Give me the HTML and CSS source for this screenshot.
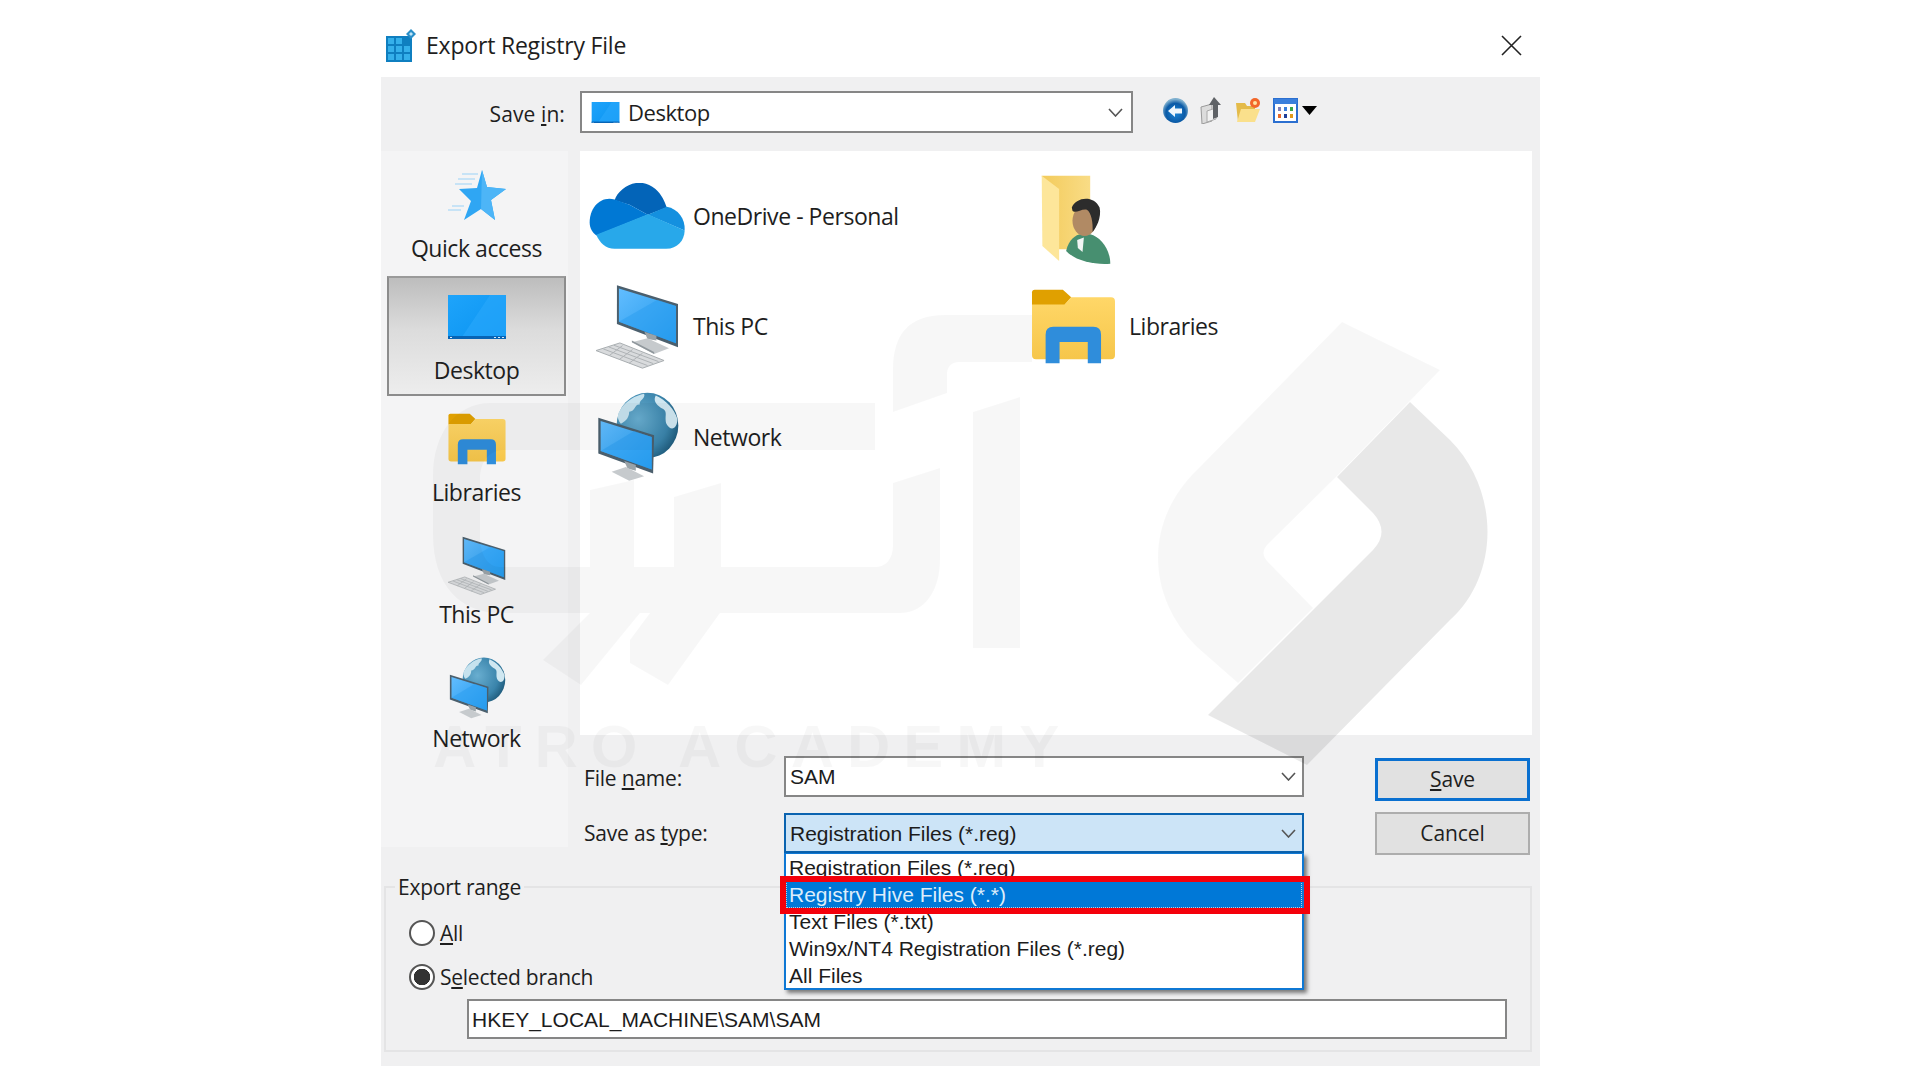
FILE: index.html
```html
<!DOCTYPE html>
<html lang="en">
<head>
<meta charset="utf-8">
<title>Export Registry File</title>
<link rel="stylesheet" href="styles.css">
</head>
<body>
<svg class="defs" aria-hidden="true">
  <defs>
    <linearGradient id="gScreen" x1="0" y1="0" x2="1" y2="1"><stop offset="0" stop-color="#62bdff"/><stop offset="1" stop-color="#1f97ea"/></linearGradient>
    <linearGradient id="gDesk" x1="0" y1="0" x2="1" y2="1"><stop offset="0" stop-color="#1ea4fb"/><stop offset="1" stop-color="#0a93f0"/></linearGradient>
    <radialGradient id="gGlobe" cx=".35" cy=".4" r=".75"><stop offset="0" stop-color="#69aed0"/><stop offset=".65" stop-color="#3a84ab"/><stop offset="1" stop-color="#174f6e"/></radialGradient>
    <linearGradient id="gFolder" x1="0" y1="0" x2="0" y2="1"><stop offset="0" stop-color="#ffd768"/><stop offset="1" stop-color="#f6c64a"/></linearGradient>
    <linearGradient id="gBack" x1="0" y1="0" x2="1" y2="0"><stop offset="0" stop-color="#f3cb5b"/><stop offset="1" stop-color="#f9dc86"/></linearGradient>
    <radialGradient id="gBackBtn" cx=".5" cy=".6" r=".55"><stop offset="0" stop-color="#1a86d8"/><stop offset=".7" stop-color="#0b5aa6"/><stop offset="1" stop-color="#7fb0cf"/></radialGradient>

    <symbol id="pc" viewBox="50 345 250 255">
      <path d="M113 348L297 405V535L113 465Z" fill="#4b5f6d"/>
      <path d="M119 358L291 411V523L119 458Z" fill="url(#gScreen)"/>
      <path d="M119 458L235 392L291 411V523Z" fill="#2b9ff0" opacity=".55"/>
      <path d="M196 488L232 500V515L205 510Z" fill="#9aa3a8"/>
      <path d="M158 520L205 508L270 538L225 555Z" fill="#c6cacd"/>
      <path d="M158 520L225 555V549L158 515Z" fill="#8f979c"/>
      <path d="M50 545L122 522L255 575L190 598Z" fill="#d9dbdd" stroke="#a8adb0" stroke-width="3"/>
      <path d="M72 540L205 590M88 534L222 584M104 529L238 578M130 530L90 560M160 542L120 572M190 553L150 583" stroke="#aeb2b5" stroke-width="3" fill="none"/>
    </symbol>

    <symbol id="net" viewBox="50 665 250 270">
      <ellipse cx="205" cy="765" rx="93" ry="98" fill="url(#gGlobe)"/>
      <path d="M122 720C140 690 170 675 195 670C200 685 178 690 182 702C165 700 170 722 150 724C150 745 135 755 125 760C112 745 115 730 122 720Z" fill="#c6e2ee"/>
      <path d="M230 675C262 690 285 715 295 745C296 775 275 785 262 760C255 735 270 722 245 712C230 700 222 690 230 675Z" fill="#cfe7f1"/>
      <path d="M57 742L225 795L222 910L57 850Z" fill="#4b5f6d"/>
      <path d="M64 752L218 800V898L64 842Z" fill="url(#gScreen)"/>
      <path d="M64 842L165 782L218 800V898Z" fill="#2b9ff0" opacity=".55"/>
      <path d="M135 872L170 884V902L145 895Z" fill="#9aa3a8"/>
      <path d="M97 905L140 890L195 918L150 932Z" fill="#c6cacd"/>
    </symbol>

    <symbol id="onedrive" viewBox="28 33 292 200">
      <path d="M105 84C118 45 178 8 228 50C248 68 256 88 262 106L205 128L150 98Z" fill="#0364b8"/>
      <path d="M105 82C62 70 30 108 30 150C30 168 38 180 50 190L205 128L150 98Z" fill="#0078d4"/>
      <path d="M262 104C296 110 318 140 316 175L205 128Z" fill="#1490df"/>
      <path d="M50 188L205 126L316 175C315 205 295 230 260 230H105C78 230 60 212 50 188Z" fill="#28a8ea"/>
    </symbol>

    <symbol id="lib" viewBox="35 368 254 226">
      <path d="M37 378Q37 370 45 370H130L155 393L135 416H37Z" fill="#e0a000"/>
      <path d="M37 415H135L155 393H275Q287 393 287 405V568Q287 580 275 580H49Q37 580 37 568Z" fill="url(#gFolder)"/>
      <path d="M78 592V505Q78 482 101 482H222Q245 482 245 505V592H205V528H120V592Z" fill="#2f8ddb"/>
    </symbol>

    <symbol id="user" viewBox="65 25 215 275">
      <path d="M70 30H215V250H120Z" fill="url(#gBack)"/>
      <path d="M70 30L122 70V285L72 240Z" fill="#fde69a"/>
      <path d="M143 255C150 222 172 205 188 205H215C245 212 275 250 275 293C230 297 170 285 143 255Z" fill="#478f70"/>
      <path d="M176 222L196 215L192 258L178 246Z" fill="#f2f5f4"/>
      <ellipse cx="198" cy="165" rx="36" ry="45" fill="#b18a64"/>
      <path d="M160 125C170 95 225 85 243 125C250 155 232 188 222 198C224 170 218 140 205 132C190 128 170 145 162 135Z" fill="#2c2c2c"/>
    </symbol>

    <symbol id="desk" viewBox="0 0 58 44">
      <rect width="58" height="44" fill="url(#gDesk)"/>
      <path d="M14 42L42 0H58V42Z" fill="#2aa8fb" opacity=".6"/>
      <rect y="41" width="58" height="3" fill="#0764b5"/>
      <path d="M46 42h2v1h-2zM50 42h2v1h-2zM54 42h2v1h-2zM2 42h2v1H2z" fill="#d8ecfb"/>
    </symbol>

    <symbol id="star" viewBox="0 0 58 50">
      <path d="M34 0L39 17L58 19L43 30L47 50L33 39L16 50L23 31L11 19L29 18Z" fill="#2fa6f3"/>
      <path d="M34 0L33 39L47 50L43 30L58 19L39 17Z" fill="#4db5f7"/>
      <path d="M14 4H30M10 9H27M7 14H24M4 36H16M0 40H13" stroke="#b8ddf6" stroke-width="1.5" fill="none"/>
    </symbol>

    <symbol id="chev" viewBox="0 0 15 9">
      <path d="M1 1L7.5 8L14 1" fill="none" stroke="#555" stroke-width="1.6"/>
    </symbol>
  </defs>
</svg>

<header class="titlebar">
  <svg class="app-icon" viewBox="0 0 30 33" aria-hidden="true">
    <rect x="0" y="7" width="26" height="26" fill="#0f7fc0"/>
    <path d="M2 9h6v6H2zM10 9h6v6h-6zM2 17h6v6H2zM10 17h6v6h-6zM18 17h6v6h-6zM2 25h6v6H2zM10 25h6v6h-6zM18 25h6v6h-6z" fill="#35b0ea"/>
    <path d="M25 0L30 5L25 10L20 5Z" fill="#2a8fc8"/>
    <path d="M25 3L27 5L25 7L23 5Z" fill="#bfe5f7"/>
  </svg>
  <h1 class="title">Export Registry File</h1>
  <svg class="close" viewBox="0 0 21 21" aria-hidden="true"><path d="M1 1L20 20M20 1L1 20" stroke="#222" stroke-width="1.6" fill="none"/></svg>
</header>

<main class="panel">
  <div class="toolbar">
    <label class="save-in">Save <u>i</u>n:</label>
    <div class="combo combo-location">
      <svg class="desk-small"><use href="#desk"/></svg>
      <span class="ui-text">Desktop</span>
      <svg class="chev"><use href="#chev"/></svg>
    </div>
    <div class="tools">
      <svg class="tool tool-back" viewBox="0 0 25 25" aria-hidden="true">
        <circle cx="12.5" cy="12.5" r="12.5" fill="url(#gBackBtn)"/>
        <path d="M5 13L12 7V10.5H19V15.5H12V19Z" fill="#eef6fc"/>
      </svg>
      <svg class="tool tool-up" viewBox="0 0 22 27" aria-hidden="true">
        <path d="M1 10L12 7V24L2 27Z" fill="#dcdcdc" stroke="#9a9a9a"/>
        <path d="M7 14L16 11V22L7 25Z" fill="#f1f1f1" stroke="#aaa"/>
        <path d="M14 0L21 8H18V20L13 22V8H9Z" fill="#5f6266"/>
      </svg>
      <svg class="tool tool-new" viewBox="0 0 25 25" aria-hidden="true">
        <path d="M0 5H9L11 8H19V24L2 24Z" fill="#e4bb4a"/>
        <path d="M1 24L5 11H24L19 24Z" fill="#fae08c"/>
        <circle cx="19" cy="5" r="5" fill="#f2672a"/>
        <circle cx="19" cy="5" r="2" fill="#ffe3a0"/>
      </svg>
      <svg class="tool" viewBox="0 0 25 25" aria-hidden="true">
        <rect x="1" y="1" width="23" height="23" fill="#fff" stroke="#2b6fd0" stroke-width="2"/>
        <rect x="1" y="1" width="23" height="5" fill="#3a7fdc"/>
        <path d="M5 9h3v4H5z" fill="#7f7fb8"/><path d="M11 9h3v4h-3z" fill="#3a7fdc"/><path d="M17 9h3v4h-3z" fill="#3aa54a"/>
        <path d="M5 16h3v4H5z" fill="#e8692a"/><path d="M11 16h3v4h-3z" fill="#1f3f9a"/><path d="M17 16h3v4h-3z" fill="#e09a1a"/>
      </svg>
      <svg class="tool-arrow" viewBox="0 0 15 9" aria-hidden="true"><path d="M0 0H15L7.5 9Z" fill="#000"/></svg>
    </div>
  </div>

  <div class="middle">
    <nav class="places">
      <div class="place">
        <div class="place-icon"><svg class="i-star"><use href="#star"/></svg></div>
        <span class="ui-text">Quick access</span>
      </div>
      <div class="place place-active">
        <div class="place-icon"><svg class="i-desk"><use href="#desk"/></svg></div>
        <span class="ui-text">Desktop</span>
      </div>
      <div class="place">
        <div class="place-icon"><svg class="i-lib"><use href="#lib"/></svg></div>
        <span class="ui-text">Libraries</span>
      </div>
      <div class="place">
        <div class="place-icon"><svg class="i-pc"><use href="#pc"/></svg></div>
        <span class="ui-text">This PC</span>
      </div>
      <div class="place place-last">
        <div class="place-icon"><svg class="i-net"><use href="#net"/></svg></div>
        <span class="ui-text">Network</span>
      </div>
    </nav>

    <div class="content">
      <section class="listing">
        <div class="entry"><div class="entry-icon"><svg class="l-onedrive"><use href="#onedrive"/></svg></div><span class="ui-text">OneDrive - Personal</span></div>
        <div class="entry"><div class="entry-icon"><svg class="l-user"><use href="#user"/></svg></div></div>
        <div class="entry"><div class="entry-icon"><svg class="l-pc"><use href="#pc"/></svg></div><span class="ui-text">This PC</span></div>
        <div class="entry"><div class="entry-icon"><svg class="l-lib"><use href="#lib"/></svg></div><span class="ui-text">Libraries</span></div>
        <div class="entry"><div class="entry-icon"><svg class="l-net"><use href="#net"/></svg></div><span class="ui-text">Network</span></div>
      </section>

      <div class="form">
        <div class="fields">
          <div class="field field-file">
            <label class="field-label">File <u>n</u>ame:</label>
            <div class="combo combo-file"><span class="ms-text">SAM</span><svg class="chev"><use href="#chev"/></svg></div>
          </div>
          <div class="field">
            <label class="field-label">Save as <u>t</u>ype:</label>
            <div class="combo combo-type">
              <span class="ms-text">Registration Files (*.reg)</span><svg class="chev"><use href="#chev"/></svg>
              <ul class="dropdown">
                <li class="ms-text">Registration Files (*.reg)</li>
                <li class="ms-text option-selected">Registry Hive Files (*.*)</li>
                <li class="ms-text">Text Files (*.txt)</li>
                <li class="ms-text">Win9x/NT4 Registration Files (*.reg)</li>
                <li class="ms-text">All Files</li>
                <li class="redbox" aria-hidden="true"></li>
              </ul>
            </div>
          </div>
        </div>
        <div class="buttons">
          <button class="btn btn-default"><u>S</u>ave</button>
          <button class="btn">Cancel</button>
        </div>
      </div>
    </div>
  </div>

  <fieldset class="range">
    <legend class="ui-small">Export range</legend>
    <div class="radio-row radio-first"><span class="radio"></span><span class="ui-small"><u>A</u>ll</span></div>
    <div class="radio-row"><span class="radio radio-on"></span><span class="ui-small">S<u>e</u>lected branch</span></div>
    <div class="path-input"><span class="ms-text">HKEY_LOCAL_MACHINE\SAM\SAM</span></div>
  </fieldset>
</main>

<svg class="watermark" viewBox="0 0 1920 1080" aria-hidden="true">
  <g class="wm-soft">
    <path d="M875 403H490C455 403 433 435 433 475V535C433 585 460 613 500 613H900C925 613 940 590 940 560V468L893 483V545C893 560 885 567 875 567H721V483L674 497V567H634V480L590 490V567H500C488 567 480 555 480 535V480C480 460 490 450 505 450H875Z"/>
    <path d="M893 412V370C893 335 908 315 945 315H1032V362H960C950 362 947 368 947 375V393Z"/>
    <path d="M973 412L1020 397V648H973Z"/>
    <path d="M630 663L706 613H650L630 640ZM630 663L668 685L720 613H706Z"/>
    <path d="M543 660L581 685L640 613H590Z"/>
    <path d="M1342 322L1440 370L1337 476L1267 545Q1260 553 1267 561L1313 608L1238 683L1197 647C1145 595 1145 520 1197 470Z"/>
  </g>
  <path class="wm-dark" d="M1410 402L1450 440C1500 490 1500 575 1450 620L1307 765L1208 715L1373 550Q1390 532 1373 513L1337 477Z"/>
  <text class="wm-text" x="433" y="767">ATRO ACADEMY</text>
</svg>
</body>
</html>
```

FILE: styles.css
```css
* { box-sizing: border-box; }
html, body { margin: 0; padding: 0; }
body {
  width: 1920px;
  height: 1080px;
  overflow: hidden;
  background: #fff;
  color: #1c1c1c;
  position: relative;
}

.defs { position: absolute; width: 0; height: 0; }

.ui-text { font: 400 23px/1 "Open Sans", sans-serif; letter-spacing: -0.45px; color: #1e1e1e; }
.ui-small { font: 400 21px/1 "Open Sans", sans-serif; letter-spacing: -0.25px; color: #1e1e1e; }
.ms-text { font: 400 21px/1 "Liberation Sans", sans-serif; color: #1c1c1c; letter-spacing: 0; }

/* Title bar */
.titlebar {
  margin-left: 381px;
  width: 1159px;
  height: 77px;
  display: flex;
  align-items: center;
  padding: 14px 18px 0 5px;
}
.app-icon { width: 30px; height: 33px; margin-right: 10px; }
.title { margin: 0; flex: 1; font: 400 23px/1 "Open Sans", sans-serif; letter-spacing: -0.2px; color: #1e1e1e; }
.close { width: 21px; height: 21px; }

/* Panel */
.panel {
  margin-left: 381px;
  width: 1159px;
  height: 989px;
  background: #f0f0f1;
  display: flex;
  flex-direction: column;
}

.toolbar { height: 74px; display: flex; align-items: flex-start; padding-top: 14px; }
.save-in {
  width: 184px;
  text-align: right;
  font: 400 21px/46px "Open Sans", sans-serif;
  letter-spacing: 0.1px;
  color: #1e1e1e;
  margin-right: 15px;
}

.combo {
  position: relative;
  display: flex;
  align-items: center;
  background: #fff;
  border: 2px solid #868686;
}
.combo .chev { width: 15px; height: 9px; flex: none; }
.combo-location { width: 553px; height: 42px; padding: 0 8px 0 9px; }
.combo-location .ui-text { flex: 1; margin-left: 8px; font-size: 22px; }
.desk-small { width: 29px; height: 21px; }

.tools { display: flex; align-items: center; height: 38px; margin-left: 30px; }
.tool { width: 25px; height: 25px; margin-right: 11px; }
.tool-back { margin-right: 12px; }
.tool-up { width: 22px; height: 27px; margin-right: 14px; }
.tool-new { margin-right: 12px; }
.tool-arrow { width: 15px; height: 9px; margin-left: -7px; }

/* Middle */
.middle { display: flex; height: 696px; }
.places {
  width: 187px;
  background: #f4f4f5;
  padding: 3px 2px 0 6px;
  display: flex;
  flex-direction: column;
  gap: 2px;
}
.place {
  height: 120px;
  display: flex;
  flex-direction: column;
  align-items: center;
  padding-top: 5px;
}
.place-active {
  border: 2px solid #8c8c8c;
  border-top-color: #9a9a9a;
  background: linear-gradient(#bdbdbd 0, #dcdcdc 45%, #ededed 100%);
  padding-top: 3px;
}
.place-last { padding-top: 7px; }
.place-icon { height: 72px; display: flex; align-items: center; justify-content: center; }
.place .ui-text { line-height: 34px; }
.i-star { width: 58px; height: 50px; }
.i-desk { width: 58px; height: 44px; }
.i-lib { width: 58px; height: 52px; }
.i-pc { width: 58px; height: 59px; margin-top: 8px; }
.i-net { width: 58px; height: 62px; margin-top: 6px; }

.content { flex: 1; padding-left: 12px; padding-right: 8px; }
.listing {
  height: 584px;
  background: #fff;
  padding-top: 10px;
  display: grid;
  grid-template-columns: 436px 436px;
  grid-auto-rows: 110.5px;
}
.entry { display: flex; align-items: center; }
.entry-icon { width: 113px; height: 100%; display: flex; align-items: center; justify-content: center; flex: none; }
.l-onedrive { width: 97px; height: 67px; margin-left: 2px; }
.l-user { width: 72px; height: 92px; margin: 8px 0 0 6px; }
.l-pc { width: 83px; height: 85px; margin-left: 2px; }
.l-lib { width: 85px; height: 75px; margin-left: 2px; }
.l-net { width: 83px; height: 90px; margin-left: 2px; }

/* Form */
.form { display: flex; padding-top: 21px; }
.fields { width: 724px; display: flex; flex-direction: column; gap: 16px; }
.field { display: flex; align-items: center; }
.field-label {
  width: 204px;
  padding-left: 4px;
  font: 400 21px/1 "Open Sans", sans-serif;
  letter-spacing: -0.2px;
  color: #1e1e1e;
}
.field-file .field-label { padding-top: 4px; }
.combo-file, .combo-type { width: 520px; justify-content: space-between; padding: 0 6px 0 4px; }
.combo-file { height: 41px; }
.combo-type { height: 40px; background: #cce4f7; border-color: #0a63b0; }

.dropdown {
  list-style: none;
  margin: 0;
  padding: 0 0 0 3px;
  position: absolute;
  left: -2px;
  top: 38px;
  width: 520px;
  height: 137px;
  background: #fff;
  border: 2px solid #0f78d4;
  border-top-width: 1px;
  box-shadow: 3px 3px 4px rgba(0, 0, 0, .5);
  z-index: 5;
}
.dropdown li { height: 27px; line-height: 27px; white-space: nowrap; }
.dropdown .option-selected {
  margin-left: -3px;
  padding-left: 3px;
  background: #0078d7;
  color: #dcedfb;
  outline: 1px dotted #bcd;
  outline-offset: -1px;
}
.dropdown .redbox {
  position: absolute;
  left: -6px;
  right: -8px;
  top: 22px;
  height: 38px;
  border: 6px solid #f4000b;
}

.buttons { width: 155px; margin-left: 71px; margin-top: 2px; display: flex; flex-direction: column; gap: 11px; }
.btn {
  height: 43px;
  background: #e1e1e1;
  border: 2px solid #adadad;
  font: 400 21px/1 "Open Sans", sans-serif;
  letter-spacing: -0.1px;
  color: #1e1e1e;
  padding: 0;
}
.btn-default { border: 3px solid #0a70d0; }

/* Export range */
.range {
  margin: 26px 0 0 3px;
  width: 1148px;
  height: 179px;
  padding: 0;
  border: 2px solid #e4e4e5;
}
.range legend { margin-left: 9px; padding: 0 3px; line-height: 28px; }
.radio-row { height: 44px; margin-left: 23px; display: flex; align-items: center; gap: 5px; }
.radio-first { margin-top: 10px; }
.radio {
  width: 26px;
  height: 26px;
  border: 2px solid #555;
  border-radius: 50%;
  background: #fff;
}
.radio-on { background: radial-gradient(circle, #333 0 8px, #fff 8.5px); }
.path-input {
  margin: 0 0 0 81px;
  width: 1040px;
  height: 40px;
  background: #fff;
  border: 2px solid #868686;
  display: flex;
  align-items: center;
  padding-left: 3px;
}

/* Watermark */
.watermark {
  position: absolute;
  left: 0;
  top: 0;
  width: 1920px;
  height: 1080px;
  pointer-events: none;
  z-index: 10;
}
.wm-soft { fill: rgba(0, 0, 0, .03); }
.wm-dark { fill: rgba(0, 0, 0, .09); }
.wm-text { font: 700 60px "Liberation Sans", sans-serif; letter-spacing: 13px; fill: rgba(0, 0, 0, .03); }
```
